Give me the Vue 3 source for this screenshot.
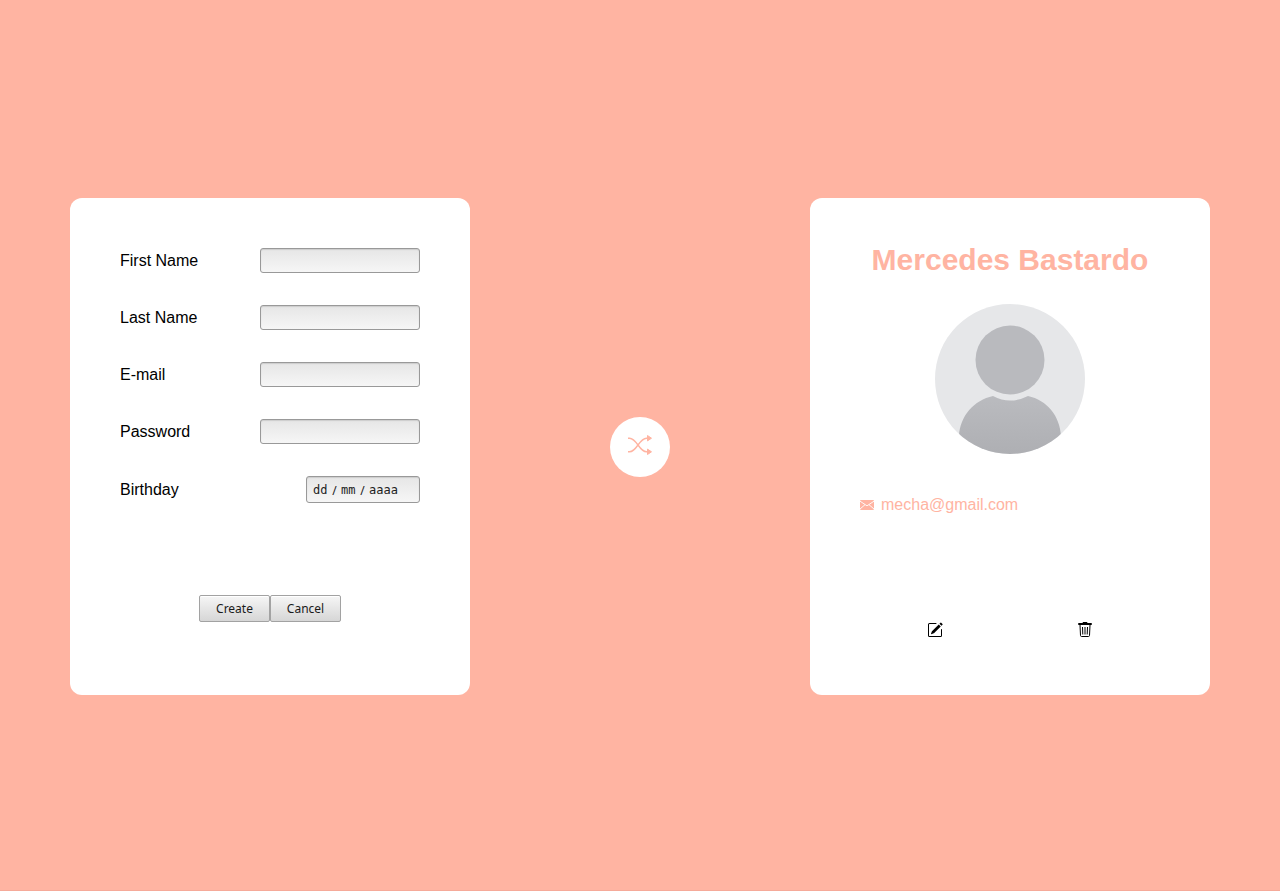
<script setup>
import { reactive, ref } from 'vue'

const fields = [
  { id: 'first-name', label: 'First Name', type: 'text' },
  { id: 'last-name', label: 'Last Name', type: 'text' },
  { id: 'email', label: 'E-mail', type: 'email' },
  { id: 'password', label: 'Password', type: 'password' },
]

const form = reactive({ 'first-name': '', 'last-name': '', email: '', password: '' })
const birthday = reactive({ day: '', month: '', year: '' })
const user = ref({ name: 'Mercedes Bastardo', email: 'mecha@gmail.com' })
</script>

<template>
  <main class="page">
    <form class="card form-card" @submit.prevent>
      <div class="fields">
        <div v-for="field in fields" :key="field.id" class="row">
          <label :for="field.id">{{ field.label }}</label>
          <input :id="field.id" v-model="form[field.id]" class="box text-box" :type="field.type" />
        </div>
        <div class="row">
          <label for="birthday-day">Birthday</label>
          <div class="box date-box">
            <input id="birthday-day" v-model="birthday.day" class="part" placeholder="dd" maxlength="2" />
            <span>/</span>
            <input v-model="birthday.month" class="part" placeholder="mm" maxlength="2" aria-label="Month" />
            <span>/</span>
            <input v-model="birthday.year" class="part year" placeholder="aaaa" maxlength="4" aria-label="Year" />
          </div>
        </div>
      </div>
      <div class="actions">
        <button class="btn" type="submit">Create</button>
        <button class="btn" type="button">Cancel</button>
      </div>
    </form>

    <button class="shuffle" type="button" aria-label="Shuffle">
      <svg width="24" height="20" viewBox="0 0 24 20" fill="none" stroke="currentColor" stroke-width="1.4">
        <path d="M0 3.200h1.500C9 3.200 11 16.800 18.500 16.800H20M0 16.800h1.500C9 16.800 11 3.200 18.500 3.200H20" />
        <path d="M19.500.5 23.500 3.200l-4 2.700zM19.500 14.100l4 2.700-4 2.700z" fill="currentColor" stroke-width="1" />
      </svg>
    </button>

    <article class="card user-card">
      <h1>{{ user.name }}</h1>
      <svg class="avatar" viewBox="0 0 150 150" role="img" aria-label="Profile picture">
        <defs>
          <clipPath id="avatar-clip"><circle cx="75" cy="75" r="75" /></clipPath>
          <linearGradient id="avatar-body" x1="0" y1="0" x2="0" y2="1">
            <stop offset="0" stop-color="#babbbf" />
            <stop offset="1" stop-color="#aeafb3" />
          </linearGradient>
        </defs>
        <g clip-path="url(#avatar-clip)">
          <rect width="150" height="150" fill="#e6e7e9" />
          <circle cx="75" cy="56" r="34.500" fill="#b9babe" />
          <path d="M24 132C25 112 39 96 58 92Q75 101 93 92C112 96 125 112 126 132V150H24Z" fill="url(#avatar-body)" />
        </g>
      </svg>
      <p class="mail">
        <svg width="14" height="10" viewBox="0 0 14 10">
          <rect width="14" height="10" rx="1" fill="currentColor" />
          <path d="M0 1.200 7 5.800l7-4.600M0 9l5-4.300M14 9 9 4.700" fill="none" stroke="#fff" stroke-width=".9" />
        </svg>
        <span>{{ user.email }}</span>
      </p>
      <div class="tools">
        <button class="tool" type="button" aria-label="Edit">
          <svg width="16" height="16" viewBox="0 0 16 16" fill="currentColor">
            <path d="M15.502 1.940a.5.5 0 0 1 0 .706L14.459 3.690l-2-2L13.502.646a.5.5 0 0 1 .707 0l1.293 1.293zm-1.750 2.456-2-2L4.939 9.210a.5.5 0 0 0-.121.196l-.805 2.414a.25.25 0 0 0 .316.316l2.414-.805a.5.5 0 0 0 .196-.120l6.813-6.814z" />
            <path d="M1 13.500A1.500 1.500 0 0 0 2.500 15h11a1.500 1.500 0 0 0 1.500-1.500v-6a.5.5 0 0 0-1 0v6a.5.5 0 0 1-.5.5h-11a.5.5 0 0 1-.5-.5v-11a.5.5 0 0 1 .5-.5H9a.5.5 0 0 0 0-1H2.500A1.500 1.500 0 0 0 1 2.500z" />
          </svg>
        </button>
        <button class="tool" type="button" aria-label="Delete">
          <svg width="16" height="16" viewBox="0 0 16 16" fill="none" stroke="currentColor">
            <path d="M1.500 1.500h13v1h-13zM6 1.500V.5h4v1M3 3l.5 10.500q.1 1 1 1h7q.9 0 1-1L13 3M5.500 5l.3 7.500M8 5v7.500M10.500 5l-.3 7.500" />
          </svg>
        </button>
      </div>
    </article>
  </main>
</template>

<style>
body {
  margin: 0;
  background: #ffb4a2;
}
</style>

<style scoped>
.page {
  box-sizing: border-box;
  min-height: 100vh;
  padding-top: 3px;
  display: flex;
  flex-wrap: wrap;
  align-items: center;
  justify-content: space-around;
  background: #ffb4a2;
  border-bottom: 1px solid #f5aa99;
  font-family: "Liberation Sans", Arial, sans-serif;
  font-size: 16px;
  color: #000;
}
.card {
  box-sizing: border-box;
  width: 400px;
  min-height: 497px;
  padding: 50px;
  border-radius: 12px;
  background: #fff;
  display: flex;
  flex-direction: column;
}
.fields {
  display: flex;
  flex-direction: column;
  gap: 32px;
}
.row {
  display: flex;
  justify-content: space-between;
  align-items: center;
}
.row label {
  padding-top: 1px;
  line-height: 18px;
}
.box {
  box-sizing: border-box;
  border: 1px solid #999;
  border-radius: 3px;
  background: linear-gradient(#e6e6e6, #f6f6f6);
  box-shadow: inset 0 1px 1px #ccc;
  color: #222;
}
.text-box {
  width: 160px;
  height: 25px;
  padding: 2px 6px;
  font: 12px "Noto Sans", sans-serif;
}
.date-box {
  width: 114px;
  height: 27px;
  padding: 1px 6px 0;
  display: flex;
  align-items: center;
  font: 12px "Noto Sans", sans-serif;
}
.date-box span {
  width: 13px;
  text-align: center;
}
.part {
  width: 15px;
  padding: 0;
  border: 0;
  background: none;
  color: inherit;
  font: 12px "DejaVu Sans Mono", monospace;
}
.part::placeholder {
  color: #222;
  opacity: 1;
}
.year {
  width: 30px;
}
.actions {
  display: flex;
  justify-content: center;
  margin-top: 92px;
}
.btn {
  box-sizing: border-box;
  width: 71px;
  height: 27px;
  padding: 0;
  border: 1px solid #a2a2a2;
  border-radius: 2px;
  background: linear-gradient(#f6f6f6, #d6d6d6);
  box-shadow: inset 0 1px 0 #fff;
  color: #1a1a1a;
  font: 12px "Noto Sans", sans-serif;
}
.shuffle {
  width: 60px;
  height: 60px;
  padding: 0 0 4px;
  border: 0;
  border-radius: 50%;
  background: #fff;
  color: #ffb4a2;
  display: flex;
  align-items: center;
  justify-content: center;
}
.user-card {
  align-items: center;
  padding-top: 43px;
  color: #ffb4a2;
}
h1 {
  margin: 0;
  font-size: 30px;
  line-height: 37px;
  white-space: nowrap;
}
.avatar {
  width: 150px;
  height: 150px;
  margin-top: 26px;
}
.mail {
  align-self: stretch;
  margin: 42px 0 0;
  display: flex;
  align-items: center;
  gap: 7px;
  line-height: 18px;
}
.tools {
  align-self: stretch;
  margin-top: 108px;
  display: flex;
  justify-content: space-around;
}
.tool {
  padding: 0;
  border: 0;
  background: none;
  color: #000;
  display: flex;
}
</style>
